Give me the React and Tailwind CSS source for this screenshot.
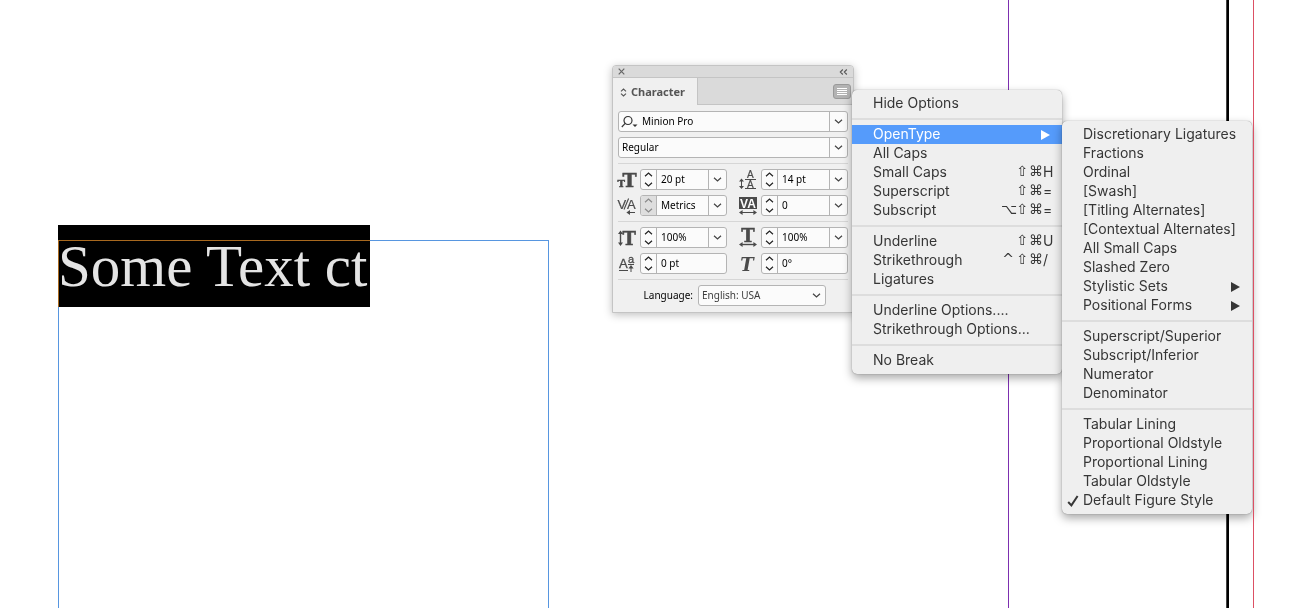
import { Fragment } from 'react';
import clsx from 'clsx';

const INK = '#4a4a4a';

const OPTIONS_MENU = [
  [{ label: 'Hide Options' }],
  [
    { label: 'OpenType', submenu: true, active: true },
    { label: 'All Caps' },
    { label: 'Small Caps', mods: ['⇧', '⌘'], shortcut: 'H' },
    { label: 'Superscript', mods: ['⇧', '⌘'], shortcut: '=' },
    { label: 'Subscript', mods: ['⌥', '⇧', '⌘'], shortcut: '=' },
  ],
  [
    { label: 'Underline', mods: ['⇧', '⌘'], shortcut: 'U' },
    { label: 'Strikethrough', mods: ['^', '⇧', '⌘'], shortcut: '/' },
    { label: 'Ligatures' },
  ],
  [{ label: 'Underline Options....' }, { label: 'Strikethrough Options...' }],
  [{ label: 'No Break' }],
];

const OPENTYPE_MENU = [
  [
    { label: 'Discretionary Ligatures' },
    { label: 'Fractions' },
    { label: 'Ordinal' },
    { label: '[Swash]' },
    { label: '[Titling Alternates]' },
    { label: '[Contextual Alternates]' },
    { label: 'All Small Caps' },
    { label: 'Slashed Zero' },
    { label: 'Stylistic Sets', submenu: true },
    { label: 'Positional Forms', submenu: true },
  ],
  [
    { label: 'Superscript/Superior' },
    { label: 'Subscript/Inferior' },
    { label: 'Numerator' },
    { label: 'Denominator' },
  ],
  [
    { label: 'Tabular Lining' },
    { label: 'Proportional Oldstyle' },
    { label: 'Proportional Lining' },
    { label: 'Tabular Oldstyle' },
    { label: 'Default Figure Style', checked: true },
  ],
];

function Chevron({ up = false, className }) {
  return (
    <svg viewBox="0 0 9 5" fill="none" stroke="currentColor" strokeWidth="1.2" className={clsx('h-[5px] w-[9px]', className)}>
      <path d={up ? 'M1 4.3 4.5 1 8 4.3' : 'M1 .7 4.5 4 8 .7'} />
    </svg>
  );
}

function Icon({ children }) {
  return (
    <svg viewBox="0 0 18 18" fill={INK} stroke="none" className="h-[18px] w-[18px] shrink-0 overflow-visible" aria-hidden="true">
      {children}
    </svg>
  );
}

const SERIF = 'DejaVu Serif, serif';
const SANS = 'Liberation Sans, sans-serif';

const icons = {
  size: (
    <Icon>
      <g fontFamily={SERIF} fontWeight="700" stroke={INK} strokeWidth="0.5">
        <text x="-0.5" y="16" fontSize="10">T</text>
        <text x="4.5" y="16" fontSize="19">T</text>
      </g>
    </Icon>
  ),
  leading: (
    <Icon>
      <g fontFamily={SANS} fontSize="10" stroke={INK} strokeWidth="0.2">
        <text x="8" y="7">A</text>
        <text x="8" y="16.5">A</text>
      </g>
      <path d="M6 8.5h11M6 17.5h11M2.5 10v6" stroke={INK} strokeWidth="1" />
      <path d="M2.5 7.6 5 10.6H0zM2.5 18 5 15H0z" />
    </Icon>
  ),
  kerning: (
    <Icon>
      <g fontFamily={SANS} fontSize="13" stroke={INK} strokeWidth="0.2">
        <text x="-0.5" y="11.5">V</text>
        <text x="9" y="11.5">A</text>
      </g>
      <path d="M6 12.5 10.6 1.5M10 15.5h7" stroke={INK} strokeWidth="1.1" fill="none" />
      <path d="M8.4 15.5 12 13v5z" />
    </Icon>
  ),
  tracking: (
    <Icon>
      <path d="M0 0h18v12H0z" />
      <text x="9" y="10.5" textAnchor="middle" fill="#fff" fontFamily={SANS} fontWeight="700" fontSize="12">VA</text>
      <path d="M2 15.5h14" stroke={INK} />
      <path d="M0 15.5 3.6 13v5zM18 15.5 14.4 13v5z" />
    </Icon>
  ),
  vscale: (
    <Icon>
      <text x="4.5" y="16" fontFamily={SERIF} fontWeight="700" fontSize="18" stroke={INK} strokeWidth="0.5">T</text>
      <path d="M2.5 4v10" stroke={INK} strokeWidth="1.4" />
      <path d="M2.5 1.5 5 5H0zM2.5 17 5 13.5H0z" />
    </Icon>
  ),
  hscale: (
    <Icon>
      <text x="9" y="12.5" textAnchor="middle" fontFamily={SERIF} fontWeight="700" fontSize="18" stroke={INK} strokeWidth="0.5">T</text>
      <path d="M2 15.5h14" stroke={INK} strokeWidth="1.4" />
      <path d="M0 15.5 3.6 13v5zM18 15.5 14.4 13v5z" />
    </Icon>
  ),
  baseline: (
    <Icon>
      <g fontFamily={SANS} stroke={INK} strokeWidth="0.3">
        <text x="1" y="12.5" fontSize="13">A</text>
        <text x="10" y="8" fontSize="11">a</text>
      </g>
      <path d="M1 15.5h9M10 9.5h6M13 12v5" stroke={INK} />
      <path d="M13 10 15.6 13.4h-5.2z" />
    </Icon>
  ),
  skew: (
    <Icon>
      <text x="8" y="16" textAnchor="middle" fontFamily={SERIF} fontWeight="700" fontStyle="italic" fontSize="18">T</text>
    </Icon>
  ),
};

function Select({ label, value, className, children }) {
  return (
    <div className={clsx('flex h-[21px] items-center rounded-[3px] border border-[#b4b4b4] bg-[#fbfbfb]', className)}>
      {children}
      <select aria-label={label} className="h-full min-w-0 flex-1 appearance-none bg-transparent px-[3px] outline-none">
        <option>{value}</option>
      </select>
      <span className="pointer-events-none flex h-full w-[18px] items-center justify-center border-l border-[#b4b4b4] text-[#444]">
        <Chevron />
      </span>
    </div>
  );
}

function Stepper({ icon, label, value, menu = false, disabled = false }) {
  return (
    <div className="flex items-center gap-1">
      {icons[icon]}
      <div className="flex h-[21px] min-w-0 flex-1 overflow-hidden rounded-[3px] border border-[#b4b4b4] bg-[#fbfbfb]">
        <div
          className={clsx(
            'flex w-[16px] shrink-0 flex-col items-center justify-between border-r border-[#b4b4b4] py-[2px]',
            disabled ? 'bg-[#dedede] text-[#8a8a8a]' : 'text-[#222]'
          )}
        >
          <button type="button" disabled={disabled} aria-label={`Increase ${label}`}>
            <Chevron up className="block" />
          </button>
          <button type="button" disabled={disabled} aria-label={`Decrease ${label}`}>
            <Chevron className="block" />
          </button>
        </div>
        <input aria-label={label} defaultValue={value} className="w-0 min-w-0 flex-1 bg-transparent px-1 outline-none" />
        {menu && (
          <button
            type="button"
            aria-label={`${label} presets`}
            className="flex w-[18px] shrink-0 items-center justify-center border-l border-[#b4b4b4] text-[#444]"
          >
            <Chevron />
          </button>
        )}
      </div>
    </div>
  );
}

function CharacterPanel() {
  return (
    <section className="absolute left-[612px] top-[65px] w-[242px] rounded-t-[4px] border border-[#c4c4c4] bg-[#f0f0f0] font-['Noto_Sans',sans-serif] text-[10px] text-black shadow-[0_2px_8px_rgba(0,0,0,0.25)]">
      <header className="flex h-[12px] items-center justify-between rounded-t-[3px] border-b border-[#c4c4c4] bg-[#dadada] px-[5px]">
        <button type="button" aria-label="Close panel">
          <svg viewBox="0 0 7 7" className="block h-[7px] w-[7px]" stroke="#666" strokeWidth="1.2">
            <path d="M.7.7 6.3 6.3M6.3.7.7 6.3" />
          </svg>
        </button>
        <button type="button" aria-label="Collapse panel">
          <svg viewBox="0 0 9 6" className="block h-[6px] w-[9px]" fill="none" stroke="#555" strokeWidth="1.1">
            <path d="M3.8.5 1.3 3l2.5 2.5M7.8.5 5.3 3l2.5 2.5" />
          </svg>
        </button>
      </header>

      <div className="flex h-[27px] items-center justify-between">
        <h2 className="flex h-full w-[84px] items-center gap-1 pl-[7px] pt-px text-[11px] font-bold text-[#555]">
          <svg viewBox="0 0 7 9" className="h-[9px] w-[7px]" fill="none" stroke="#555" strokeWidth="1.1">
            <path d="M1 3.4 3.5 1 6 3.4M1 5.6 3.5 8 6 5.6" />
          </svg>
          Character
        </h2>
        <div className="flex h-full flex-1 items-center justify-end border-b border-l border-[#c4c4c4] bg-[#dadada] pr-[2px]">
          <button
            type="button"
            aria-label="Panel menu"
            className="flex h-[15px] w-[18px] items-center justify-center rounded-[3px] border border-[#999] bg-[#b3b3b3]"
          >
            <svg viewBox="0 0 10 9" className="h-[9px] w-[10px]" stroke="#fff">
              <path d="M0 1.5h10M0 3.5h10M0 5.5h10M0 7.5h10" />
            </svg>
          </button>
        </div>
      </div>

      <div className="flex flex-col gap-[5px] px-[5px] py-[6px]">
        <Select label="Font family" value="Minion Pro">
          <svg viewBox="0 0 18 14" className="ml-[2px] h-[14px] w-[18px] shrink-0" fill="none" stroke="#333" strokeWidth="1.2">
            <circle cx="7" cy="5.5" r="4" />
            <path d="M4.2 8.4.8 12" />
            <path d="M11.5 9.5h5L14 12z" fill="#333" stroke="none" />
          </svg>
        </Select>
        <Select label="Font style" value="Regular" />
        <hr className="border-[#d6d6d6]" />
        <div className="grid grid-cols-2 gap-x-3 gap-y-[5px]">
          <Stepper icon="size" label="Font size" value="20 pt" menu />
          <Stepper icon="leading" label="Leading" value="14 pt" menu />
          <Stepper icon="kerning" label="Kerning" value="Metrics" menu disabled />
          <Stepper icon="tracking" label="Tracking" value="0" menu />
        </div>
        <hr className="border-[#d6d6d6]" />
        <div className="grid grid-cols-2 gap-x-3 gap-y-[5px]">
          <Stepper icon="vscale" label="Vertical scale" value="100%" menu />
          <Stepper icon="hscale" label="Horizontal scale" value="100%" menu />
          <Stepper icon="baseline" label="Baseline shift" value="0 pt" />
          <Stepper icon="skew" label="Skew" value="0°" />
        </div>
        <hr className="border-[#d6d6d6]" />
        <div className="flex items-center justify-end gap-[5px] pr-[22px]">
          <label htmlFor="language">Language:</label>
          <div className="flex h-[21px] w-[128px] items-center rounded-[3px] border border-[#b4b4b4] bg-[#fbfbfb]">
            <select id="language" className="h-full flex-1 appearance-none bg-transparent px-[3px] text-[#3c3c3c] outline-none">
              <option>English: USA</option>
            </select>
            <Chevron className="pointer-events-none mr-1 text-[#444]" />
          </div>
        </div>
      </div>
    </section>
  );
}

function MenuItem({ item }) {
  return (
    <button
      type="button"
      role="menuitem"
      className={clsx(
        'flex h-[19px] w-full items-center pr-2 text-left',
        item.active ? 'bg-[#559bfb] text-white' : 'text-[#363636]'
      )}
    >
      <span className="flex w-[21px] shrink-0 justify-center">
        {item.checked && (
          <svg viewBox="0 0 12 12" className="h-3 w-3" fill="none" stroke="currentColor" strokeWidth="2">
            <path d="M1.2 7 4.4 10.4 10.6 1" />
          </svg>
        )}
      </span>
      <span className="flex-1 whitespace-nowrap pb-[2px]">{item.label}</span>
      {item.submenu && (
        <svg viewBox="0 0 9 10" className="mr-1 h-[10px] w-[9px]" fill="currentColor">
          <path d="M0 0 9 5 0 10z" />
        </svg>
      )}
      {item.mods && (
        <span className="flex pb-[2px]">
          {item.mods.map((mod) => (
            <span key={mod} className="w-[14px] text-center font-['DejaVu_Sans',sans-serif] text-[14px]">
              {mod}
            </span>
          ))}
          <span className="w-[11px]">{item.shortcut}</span>
        </span>
      )}
    </button>
  );
}

function Menu({ label, groups, className }) {
  return (
    <div
      role="menu"
      aria-label={label}
      className={clsx(
        'absolute rounded-[5px] bg-[#efefef] py-1 font-[Inter,sans-serif] text-[14px] leading-[19px] shadow-[0_0_1px_rgba(0,0,0,0.5),0_4px_10px_rgba(0,0,0,0.35)]',
        className
      )}
    >
      {groups.map((group, i) => (
        <Fragment key={group[0].label}>
          {i > 0 && <div role="separator" className="my-[5px] h-[2px] bg-[#dddddd]" />}
          {group.map((item) => (
            <MenuItem key={item.label} item={item} />
          ))}
        </Fragment>
      ))}
    </div>
  );
}

export default function App() {
  return (
    <main className="relative isolate min-h-screen overflow-hidden bg-white">
      {/* page edge, margin and bleed guides */}
      <div className="absolute inset-y-0 left-[1008px] w-px bg-[#7d2fb0]" />
      <div className="absolute inset-y-0 left-[1226px] w-[3px] border-l border-[#444] bg-black" />

      <p className="absolute left-[58px] top-[225px] h-[82px] w-[312px] whitespace-nowrap bg-black font-['Liberation_Serif',serif] text-[59px] leading-[82px] text-[#e4e4e4]">
        Some Text ct
      </p>
      {/* the frame edge inverts wherever it crosses the selection */}
      <div className="absolute -bottom-px left-[58px] top-[240px] w-[491px] border border-[#a8691f] mix-blend-difference" />

      <CharacterPanel />
      <Menu label="Panel options" groups={OPTIONS_MENU} className="left-[852px] top-[90px] w-[210px]" />
      <Menu label="OpenType" groups={OPENTYPE_MENU} className="left-[1062px] top-[121px] w-[190px]" />
      <div className="absolute inset-y-0 left-[1253px] w-px bg-[#dc5064]" />
    </main>
  );
}
